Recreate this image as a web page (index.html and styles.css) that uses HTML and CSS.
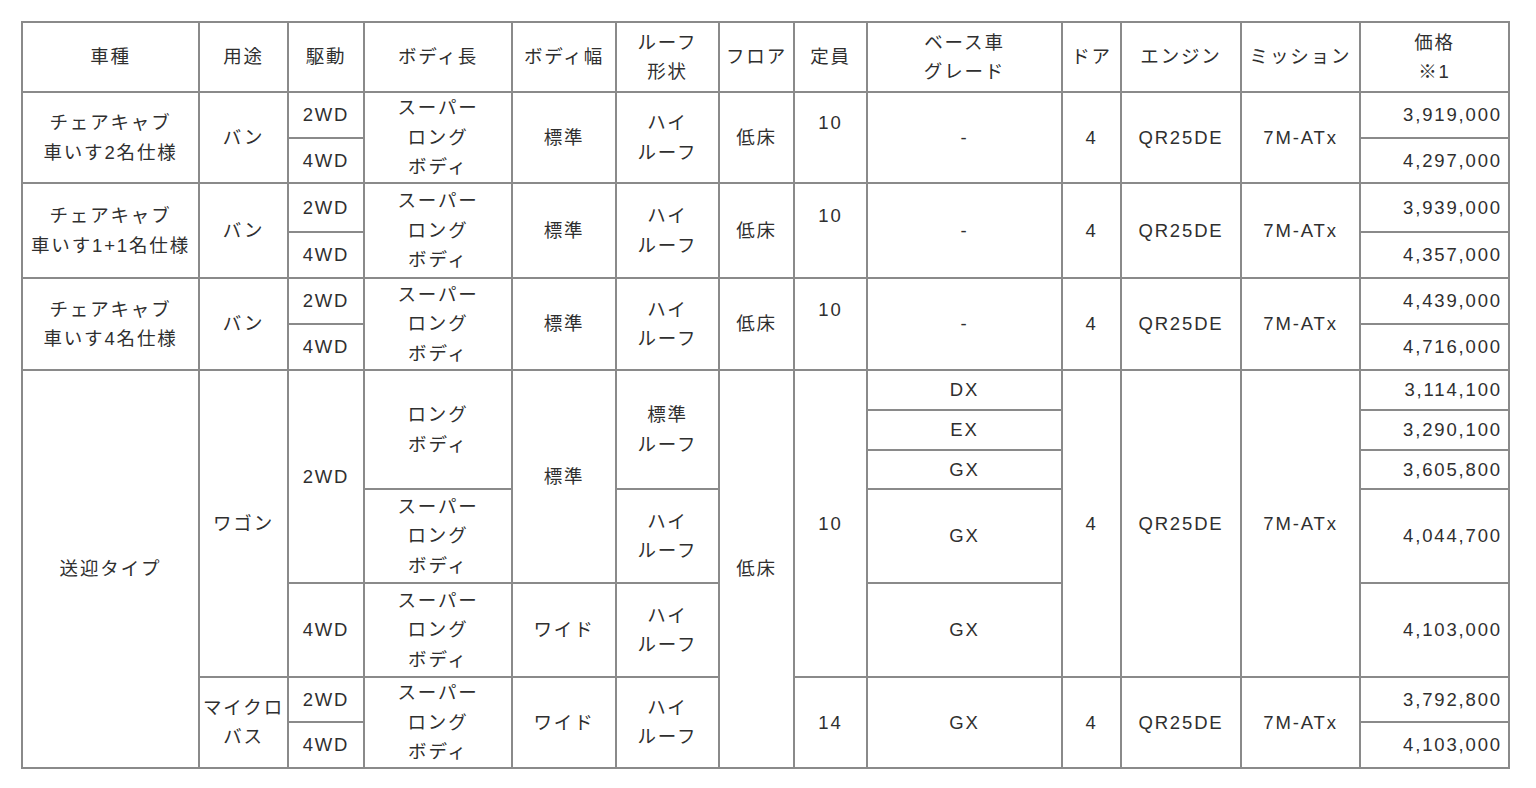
FILE: index.html
```html
<!DOCTYPE html>
<html lang="ja">
<head>
<meta charset="utf-8">
<title>送迎車 仕様表</title>
<link rel="stylesheet" href="styles.css">
</head>
<body>
<div class="wrap">
<table class="spec">
  <colgroup>
    <col class="c-type"><col class="c-use"><col class="c-drive"><col class="c-len"><col class="c-width"><col class="c-roof"><col class="c-floor"><col class="c-cap"><col class="c-grade"><col class="c-door"><col class="c-engine"><col class="c-mission"><col class="c-price">
  </colgroup>
  <thead>
    <tr class="h-head">
      <th>車種</th><th>用途</th><th>駆動</th><th>ボディ長</th><th>ボディ幅</th><th>ルーフ<br>形状</th><th>フロア</th><th>定員</th><th>ベース車<br>グレード</th><th>ドア</th><th>エンジン</th><th>ミッション</th><th>価格<br>※1</th>
    </tr>
  </thead>
  <tbody>
    <tr class="h46">
      <td rowspan="2">チェアキャブ<br>車いす2名仕様</td>
      <td rowspan="2">バン</td>
      <td>2WD</td>
      <td rowspan="2">スーパー<br>ロング<br>ボディ</td>
      <td rowspan="2">標準</td>
      <td rowspan="2">ハイ<br>ルーフ</td>
      <td rowspan="2">低床</td>
      <td rowspan="2" class="raised">10</td>
      <td rowspan="2">-</td>
      <td rowspan="2">4</td>
      <td rowspan="2">QR25DE</td>
      <td rowspan="2">7M-ATx</td>
      <td class="price">3,919,000</td>
    </tr>
    <tr class="h45">
      <td>4WD</td>
      <td class="price">4,297,000</td>
    </tr>

    <tr class="h49">
      <td rowspan="2">チェアキャブ<br>車いす1+1名仕様</td>
      <td rowspan="2">バン</td>
      <td>2WD</td>
      <td rowspan="2">スーパー<br>ロング<br>ボディ</td>
      <td rowspan="2">標準</td>
      <td rowspan="2">ハイ<br>ルーフ</td>
      <td rowspan="2">低床</td>
      <td rowspan="2" class="raised">10</td>
      <td rowspan="2">-</td>
      <td rowspan="2">4</td>
      <td rowspan="2">QR25DE</td>
      <td rowspan="2">7M-ATx</td>
      <td class="price">3,939,000</td>
    </tr>
    <tr class="h46">
      <td>4WD</td>
      <td class="price">4,357,000</td>
    </tr>

    <tr class="h46">
      <td rowspan="2">チェアキャブ<br>車いす4名仕様</td>
      <td rowspan="2">バン</td>
      <td>2WD</td>
      <td rowspan="2">スーパー<br>ロング<br>ボディ</td>
      <td rowspan="2">標準</td>
      <td rowspan="2">ハイ<br>ルーフ</td>
      <td rowspan="2">低床</td>
      <td rowspan="2" class="raised">10</td>
      <td rowspan="2">-</td>
      <td rowspan="2">4</td>
      <td rowspan="2">QR25DE</td>
      <td rowspan="2">7M-ATx</td>
      <td class="price">4,439,000</td>
    </tr>
    <tr class="h46">
      <td>4WD</td>
      <td class="price">4,716,000</td>
    </tr>

    <tr class="h40">
      <td rowspan="7">送迎タイプ</td>
      <td rowspan="5">ワゴン</td>
      <td rowspan="4">2WD</td>
      <td rowspan="3">ロング<br>ボディ</td>
      <td rowspan="4">標準</td>
      <td rowspan="3">標準<br>ルーフ</td>
      <td rowspan="7">低床</td>
      <td rowspan="5">10</td>
      <td>DX</td>
      <td rowspan="5">4</td>
      <td rowspan="5">QR25DE</td>
      <td rowspan="5">7M-ATx</td>
      <td class="price">3,114,100</td>
    </tr>
    <tr class="h40">
      <td>EX</td>
      <td class="price">3,290,100</td>
    </tr>
    <tr class="h39">
      <td>GX</td>
      <td class="price">3,605,800</td>
    </tr>
    <tr class="h94">
      <td>スーパー<br>ロング<br>ボディ</td>
      <td>ハイ<br>ルーフ</td>
      <td>GX</td>
      <td class="price">4,044,700</td>
    </tr>
    <tr class="h94">
      <td>4WD</td>
      <td>スーパー<br>ロング<br>ボディ</td>
      <td>ワイド</td>
      <td>ハイ<br>ルーフ</td>
      <td>GX</td>
      <td class="price">4,103,000</td>
    </tr>
    <tr class="h45">
      <td rowspan="2">マイクロ<br>バス</td>
      <td>2WD</td>
      <td rowspan="2">スーパー<br>ロング<br>ボディ</td>
      <td rowspan="2">ワイド</td>
      <td rowspan="2">ハイ<br>ルーフ</td>
      <td rowspan="2">14</td>
      <td rowspan="2">GX</td>
      <td rowspan="2">4</td>
      <td rowspan="2">QR25DE</td>
      <td rowspan="2">7M-ATx</td>
      <td class="price">3,792,800</td>
    </tr>
    <tr class="h45">
      <td>4WD</td>
      <td class="price">4,103,000</td>
    </tr>
  </tbody>
</table>
</div>
</body>
</html>
```
FILE: styles.css
```css
html, body {
  margin: 0;
  padding: 0;
  background: #ffffff;
}

.wrap {
  padding: 21px 0 0 21px;
}

.spec {
  border-collapse: collapse;
  table-layout: fixed;
  width: 1487px;
  font-family: "Liberation Sans", "Noto Sans CJK JP", sans-serif;
  font-size: 18.5px;
  line-height: 29.5px;
  letter-spacing: 0.1em;
  color: #2f2f2f;
}

.spec th,
.spec td {
  border: 2px solid #8a8a8a;
  padding: 0 2px;
  text-align: center;
  vertical-align: middle;
  white-space: nowrap;
  font-weight: normal;
}

.spec td.price {
  text-align: right;
  padding-right: 6px;
}

.spec td.raised {
  padding-bottom: 29.5px;
}

.c-type { width: 177px; }
.c-use { width: 89px; }
.c-drive { width: 76px; }
.c-len { width: 148px; }
.c-width { width: 104px; }
.c-roof { width: 103px; }
.c-floor { width: 75px; }
.c-cap { width: 73px; }
.c-grade { width: 195px; }
.c-door { width: 59px; }
.c-engine { width: 120px; }
.c-mission { width: 119px; }
.c-price { width: 149px; }

.h-head { height: 70px; }
.h39 { height: 39px; }
.h40 { height: 40px; }
.h45 { height: 45px; }
.h46 { height: 46px; }
.h49 { height: 49px; }
.h94 { height: 94px; }
```
